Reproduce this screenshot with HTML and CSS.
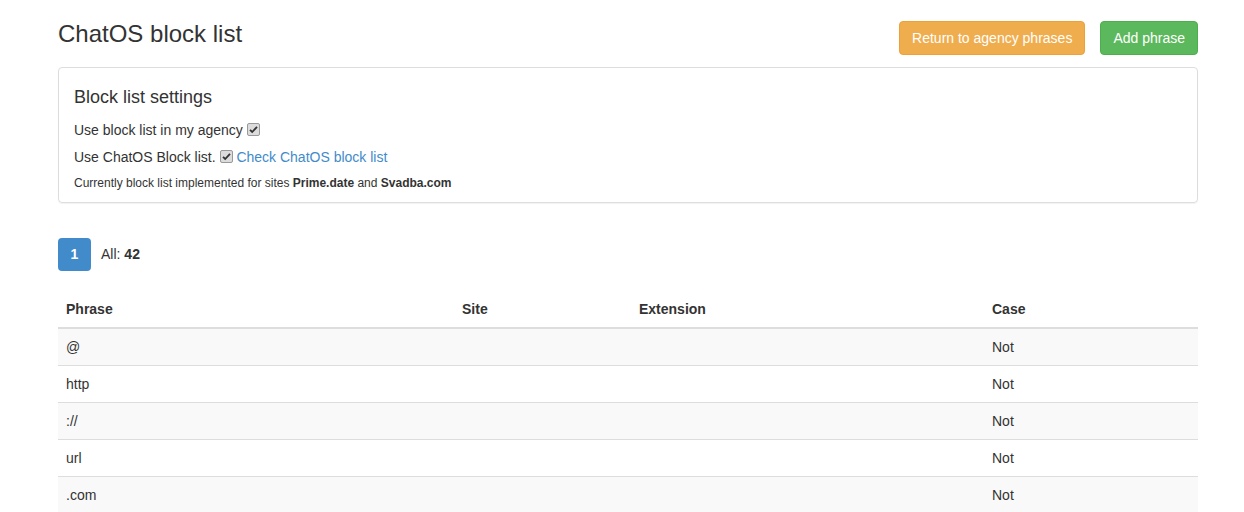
FILE: index.html
```html
<!DOCTYPE html>
<html lang="en">
<head>
    <meta charset="UTF-8">
    <title>ChatOS block list</title>
    <link rel="stylesheet" href="styles.css">
</head>
<body>
    <div class="container">
        <div class="page-header">
            <h1>ChatOS block list</h1>
            <div class="actions">
                <a class="btn btn-warning" href="#">Return to agency phrases</a>
                <a class="btn btn-success" href="#">Add phrase</a>
            </div>
        </div>

        <!-- Settings panel -->
        <div class="panel">
            <h4>Block list settings</h4>
            <p class="option">Use block list in my agency <svg class="check" width="13" height="13" viewBox="0 0 13 13"><rect x="0.5" y="0.5" width="12" height="12" rx="1.5" fill="#dcdcdc" stroke="#999"/><path d="M3 6.8 L5.2 9 L10 3.8" fill="none" stroke="#333" stroke-width="1.8"/></svg></p>
            <p class="option">Use ChatOS Block list. <svg class="check" width="13" height="13" viewBox="0 0 13 13"><rect x="0.5" y="0.5" width="12" height="12" rx="1.5" fill="#dcdcdc" stroke="#999"/><path d="M3 6.8 L5.2 9 L10 3.8" fill="none" stroke="#333" stroke-width="1.8"/></svg> <a href="#">Check ChatOS block list</a></p>
            <p class="note">Currently block list implemented for sites <b>Prime.date</b> and <b>Svadba.com</b></p>
        </div>

        <div class="pager">
            <span class="page active">1</span>
            <span class="total">All: <b>42</b></span>
        </div>

        <table class="table">
            <thead>
                <tr>
                    <th class="col-phrase">Phrase</th>
                    <th class="col-site">Site</th>
                    <th class="col-ext">Extension</th>
                    <th>Case</th>
                </tr>
            </thead>
            <tbody>
                <tr><td>@</td><td></td><td></td><td>Not</td></tr>
                <tr><td>http</td><td></td><td></td><td>Not</td></tr>
                <tr><td>://</td><td></td><td></td><td>Not</td></tr>
                <tr><td>url</td><td></td><td></td><td>Not</td></tr>
                <tr><td>.com</td><td></td><td></td><td>Not</td></tr>
            </tbody>
        </table>
    </div>
</body>
</html>
```

FILE: styles.css
```css
body {
    font-family: 'Liberation Sans', Arial, sans-serif;
    font-size: 14px;
    line-height: 1.42857;
    color: #333;
    margin: 0;
    background: #fff;
}

.container {
    width: 1140px;
    padding-left: 58px;
}

a {
    color: #428bca;
    text-decoration: none;
}

.page-header {
    display: flex;
    justify-content: space-between;
    align-items: flex-start;
    padding-top: 21px;
}

h1 {
    font-size: 24px;
    font-weight: 400;
    line-height: 26px;
    margin: 0;
}

.actions {
    display: flex;
    gap: 15px;
}

.btn {
    display: inline-block;
    padding: 6px 12px;
    font-size: 14px;
    line-height: 20px;
    border: 1px solid transparent;
    border-radius: 4px;
    color: #fff;
}

.btn-warning {
    background: #f0ad4e;
    border-color: #eea236;
}

.btn-success {
    background: #5cb85c;
    border-color: #4cae4c;
}

/* Settings panel */
.panel {
    margin-top: 12px;
    border: 1px solid #ddd;
    border-radius: 4px;
    padding: 19px 15px 10px;
    box-shadow: 0 1px 1px rgba(0, 0, 0, 0.05);
}

h4 {
    font-size: 18px;
    font-weight: 400;
    line-height: 20px;
    margin: 0 0 14px;
}

.option {
    margin: 0 0 7px;
}

.check {
    vertical-align: -1px;
}

.note {
    font-size: 12px;
    margin: 0;
}

/* Pagination */
.pager {
    display: flex;
    align-items: center;
    gap: 10px;
    margin-top: 35px;
}

.page {
    display: inline-block;
    width: 33px;
    height: 33px;
    line-height: 33px;
    text-align: center;
    border-radius: 4px;
    font-weight: bold;
}

.page.active {
    background: #428bca;
    color: #fff;
}

/* Table */
.table {
    width: 100%;
    border-collapse: collapse;
    margin-top: 20px;
}

.table th,
.table td {
    text-align: left;
    padding: 8px;
    line-height: 20px;
    border-top: 1px solid #ddd;
}

.table th {
    border-top: 0;
    border-bottom: 2px solid #ddd;
    vertical-align: bottom;
}

.table tbody tr:nth-child(odd) {
    background: #f9f9f9;
}

.col-phrase { width: 380px; }
.col-site { width: 161px; }
.col-ext { width: 337px; }
```
